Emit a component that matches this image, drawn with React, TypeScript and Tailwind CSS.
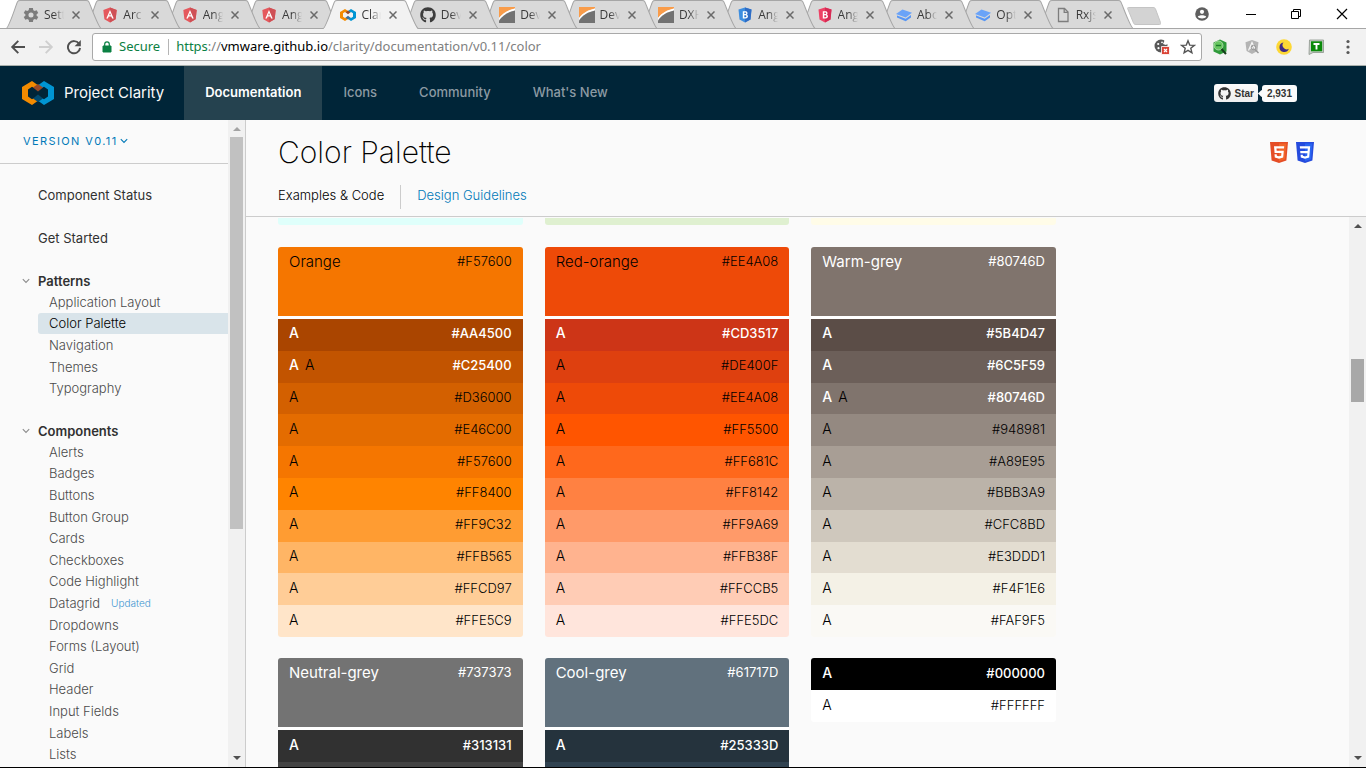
import type { ReactNode } from 'react';
import { FaGithub } from 'react-icons/fa';

/* ---------- icons ---------- */

const Gear = () => (
  <svg viewBox="0 0 24 24" className="h-4 w-4" fill="#7c7c7c">
    <path d="M20.4 13.2a8.6 8.6 0 0 0 0-2.4l2.5-1.9-2.4-4.2-3 1.2a8.5 8.5 0 0 0-2.1-1.2L14.9 1.500H9.100l-.5 3.200a8.500 8.500 0 0 0-2.100 1.200l-3-1.200L1.100 8.900l2.500 1.900a8.600 8.600 0 0 0 0 2.400l-2.500 1.900 2.400 4.200 3-1.200c.6.5 1.300.9 2.100 1.200l.5 3.200h5.800l.5-3.200a8.500 8.500 0 0 0 2.100-1.200l3 1.200 2.400-4.200zM12 15.800a3.800 3.800 0 1 1 0-7.600 3.800 3.800 0 0 1 0 7.600z" fillRule="evenodd" />
  </svg>
);

const Angular = () => (
  <svg viewBox="0 0 16 16" className="h-4 w-4">
    <path d="M8 .5 14.700 2.900 13.600 12.200 8 15.500 2.400 12.200 1.300 2.900z" fill="#e5585d" />
    <path d="M8 .5 14.700 2.900 13.600 12.200 8 15.500z" fill="#cf5055" />
    <path d="M8 3 4.300 11.500h1.600l.8-2h2.600l.8 2h1.600zM8 5.900l.9 2.300H7.100z" fill="#fff" />
  </svg>
);

const ClarityMark = ({ className, back }: { className: string; back: string }) => (
  <svg viewBox="0 0 32 24" className={className}>
    <path d="M10 0 0 6v12l10 6 6-4.200-3.800-2.800L10 18.200 6 15.600V8.400l4-2.600 2.200 1.200L16 4.200z" fill="#f38b00" />
    <path d="M22 0 32 6v12l-10 6-6-4.200 3.800-2.800 2.200 1.200 4-2.600V8.400l-4-2.600-2.200 1.200L16 4.200z" fill="#0095d3" />
    <path d="m16 3 5 3.500-5 4-5-4z" fill="#9b4a26" />
    <path d="m16 13.500 5 4-5 3.500-5-3.500z" fill={back} />
  </svg>
);

const DevExtreme = () => (
  <svg viewBox="0 0 16 16" className="h-4 w-4">
    <path d="M0 0h16v1.500C9 3 4 6 0 11z" fill="#f99c4a" />
    <path d="M0 11C4 6 9 3 16 1.500v2C9 5 4 8 0 13.500z" fill="#fff" />
    <path d="M16 3.500V16H0v-2.500C4 8 9 5 16 3.500z" fill="#727272" />
  </svg>
);

const BadgeB = ({ left, right }: { left: string; right: string }) => (
  <svg viewBox="0 0 16 16" className="h-4 w-4">
    <path d="M8 .5 14.500 2.500 13.500 12.500 8 15.500 2.500 12.500 1.500 2.500z" fill={left} />
    <path d="M8 .5 14.500 2.500 13.500 12.500 8 15.500z" fill={right} />
    <path d="M5.800 4.200h2.700c2.300 0 2.700 2.700 1.100 3.400 2.200.7 1.700 3.900-1 3.900H5.800zM7.200 5.500v1.600h1.200c1.100 0 1.100-1.600 0-1.600zm0 2.800v1.900h1.300c1.300 0 1.300-1.900 0-1.900z" fill="#fff" fillRule="evenodd" />
  </svg>
);

const Layers = () => (
  <svg viewBox="0 0 16 16" className="h-4 w-4">
    <path d="M6.500 2.500 16 5.800 9.700 10.500 0 7z" fill="#6aa3f8" />
    <path d="m1 8.500 8.700 3.300L15 8v2.500l-5.300 3.700L1 10.500z" fill="#5796f5" />
  </svg>
);

const PageIcon = () => (
  <svg viewBox="0 0 16 16" className="h-4 w-4" fill="none" stroke="#7d7d7d" strokeWidth="1.300">
    <path d="M3.500 1.500h6l3.500 3.500v9.500H3.500z" />
    <path d="M9.200 1.500v3.800H13" />
  </svg>
);

const Chevron = ({ className }: { className: string }) => (
  <svg viewBox="0 0 8 6" className={className} fill="none" stroke="currentColor" strokeWidth="1.100">
    <path d="m.8 1.200 3.200 3.200 3.200-3.200" />
  </svg>
);

const Arrow = ({ up = false, color }: { up?: boolean; color: string }) => (
  <svg viewBox="0 0 8 4" className="h-1 w-2 shrink-0" fill={color}>
    <path d={up ? 'M4 0 8 4H0z' : 'M0 0h8L4 4z'} />
  </svg>
);

const Html5 = () => (
  <svg viewBox="0 0 18 21" className="h-[21px] w-[18px]">
    <path d="M0 0h18l-1.600 18.500L9 21l-7.400-2.500z" fill="#e54d26" />
    <path d="M9 1.500h7.400L15 17.300 9 19.200z" fill="#f16529" />
    <path d="M4 4.200h10.200l-.2 2.300H6.500l.2 2.300h7.100l-.6 6.600L9 16.700l-4.200-1.300-.3-3.100h2.200l.2 1.400 2.100.6 2.200-.6.2-2.600H4.600z" fill="#fff" />
  </svg>
);

const Css3 = () => (
  <svg viewBox="0 0 18 21" className="h-[21px] w-[18px]">
    <path d="M0 0h18l-1.600 18.500L9 21l-7.400-2.500z" fill="#254bdd" />
    <path d="M9 1.500h7.400L15 17.300 9 19.200z" fill="#2965f1" />
    <path d="M3.800 4.200h10.400l-1 11.200L9 16.700l-4.200-1.300-.2-2.700h2.200l.1 1.100 2.100.6 2.200-.6.2-2.600H4.400l-.2-2.200h7.400l.2-2.400H4z" fill="#fff" />
  </svg>
);

/* ---------- browser chrome ---------- */

type TabInfo = { text: string; icon: ReactNode; active?: boolean };

const tabs: TabInfo[] = [
  { text: 'Sett', icon: <Gear /> },
  { text: 'Arc', icon: <Angular /> },
  { text: 'Ang', icon: <Angular /> },
  { text: 'Ang', icon: <Angular /> },
  { text: 'Clar', icon: <ClarityMark className="h-3 w-4" back="#3b6f9a" />, active: true },
  { text: 'Dev', icon: <FaGithub size={16} color="#3c3c3c" /> },
  { text: 'Dev', icon: <DevExtreme /> },
  { text: 'Dev', icon: <DevExtreme /> },
  { text: 'DXH', icon: <DevExtreme /> },
  { text: 'Ang', icon: <BadgeB left="#3d8ee0" right="#2f6cc4" /> },
  { text: 'Ang', icon: <BadgeB left="#ee4266" right="#d72b55" /> },
  { text: 'Abo', icon: <Layers /> },
  { text: 'Opt', icon: <Layers /> },
  { text: 'Rxjs', icon: <PageIcon /> },
];

const Tab = ({ tab, order }: { tab: TabInfo; order: number }) => (
  <div className="relative h-[29px] min-w-0 flex-1" style={{ zIndex: order }}>
    <svg viewBox="0 0 94 29" preserveAspectRatio="none" className="absolute -right-4 left-0 h-[29px] w-[calc(100%+16px)]">
      <path d="M0 29C3 28 10 4 11.500 1.500 12 .5 12.500.5 14 .5H79c1.500 0 2 0 2.500 1C83 4 91 28 94 29z" fill={tab.active ? '#f2f2f2' : '#d9d9d9'} />
      <path d="M0 28.500C3 28 10 4 11.500 1.500 12 .5 12.500.5 14 .5H79c1.500 0 2 0 2.500 1C83 4 91 28 94 28.500" fill="none" stroke="#a6a6a6" />
      {!tab.active && <path d="M0 28.500H94" stroke="#a6a6a6" />}
    </svg>
    <button className="relative flex h-[29px] w-full items-center pl-[17px] text-left text-xs text-[#3a3a3a]">
      <span className="w-4 shrink-0">{tab.icon}</span>
      <span className="ml-[5px] w-5 shrink-0 overflow-hidden whitespace-nowrap [mask-image:linear-gradient(to_right,#000_50%,transparent)]">{tab.text}</span>
      <svg viewBox="0 0 8 8" className="ml-2 h-2 w-2 shrink-0" stroke="#6a6a6a" strokeWidth="1.500">
        <path d="m.5.500 7 7m0-7-7 7" />
      </svg>
    </button>
  </div>
);

const TabStrip = () => (
  <div className="flex h-[29px] shrink-0 border-b border-[#a6a6a6] bg-white pl-1.5">
    <div className="isolate flex h-[29px] max-w-[1111px] flex-1">
      {tabs.map((t, i) => (
        <Tab key={i} tab={t} order={t.active ? 30 : 20 - i} />
      ))}
    </div>
    <button aria-label="New tab" className="ml-2.5 h-7">
      <svg viewBox="0 0 34 18" className="mt-[3px] h-[18px] w-[34px]">
        <path d="M1.500.5H26c1.500 0 2 .5 2.500 1.500l5 13.500c.5 1.500 0 2-1 2H9c-1.500 0-2-.5-2.500-1.500L.8 2C.4 1 .5.500 1.500.5z" fill="#d3d3d3" stroke="#c4c4c4" />
      </svg>
    </button>
    <div className="ml-auto flex h-[27px] items-center pr-[18px]">
      <button aria-label="Profile">
        <svg viewBox="0 0 14 14" className="h-3.5 w-3.5">
          <circle cx="7" cy="7" r="6.800" fill="#5f5f5f" />
          <circle cx="7" cy="4.800" r="2.100" fill="#fff" />
          <path d="M2.800 9.800C4 7.800 10 7.800 11.200 9.800 10 12 4 12 2.800 9.800z" fill="#fff" />
        </svg>
      </button>
      <button aria-label="Minimize" className="ml-9">
        <svg viewBox="0 0 12 12" className="h-3 w-3" stroke="#000"><path d="M1 6.500h10" /></svg>
      </button>
      <button aria-label="Restore" className="ml-[33px]">
        <svg viewBox="0 0 12 12" className="h-3 w-3" fill="none" stroke="#000"><path d="M1.500 3.500h7v7h-7zM3.500 3.500v-2h7v7h-2" /></svg>
      </button>
      <button aria-label="Close window" className="ml-[34px]">
        <svg viewBox="0 0 12 12" className="h-3 w-3" stroke="#000" strokeWidth="1.200"><path d="m1 1 10 10M11 1 1 11" /></svg>
      </button>
    </div>
  </div>
);

const Toolbar = () => (
  <div className="flex h-[37px] shrink-0 items-center border-b border-[#a9b0ac] bg-[#f2f2f2] pl-2.5 pr-2.5">
    <button aria-label="Back">
      <svg viewBox="0 0 16 16" className="h-4 w-4" fill="none" stroke="#4f4f4f" strokeWidth="1.900"><path d="M15 8H2.500M8.300 1.800 2.200 8l6.100 6.200" /></svg>
    </button>
    <button aria-label="Forward" className="ml-3">
      <svg viewBox="0 0 16 16" className="h-4 w-4" fill="none" stroke="#cfcfcf" strokeWidth="1.900"><path d="M1 8h12.500M7.700 1.800 13.800 8l-6.100 6.200" /></svg>
    </button>
    <button aria-label="Reload" className="ml-3">
      <svg viewBox="0 0 16 16" className="h-4 w-4"><path d="M13 4.600A6.100 6.100 0 1 0 14.100 9" fill="none" stroke="#4f4f4f" strokeWidth="1.900" /><path d="M14.800 1v6.200H8.600z" fill="#4f4f4f" /></svg>
    </button>
    <div className="ml-2.5 flex h-7 flex-1 items-center rounded-[3px] border border-[#a9a9a9] bg-white pl-[9px] pr-[5px] font-['Noto_Sans',sans-serif] text-[13px]">
      <svg viewBox="0 0 10 12" className="h-3 w-2.5"><path d="M1 5h8v6H1z" fill="#0b8043" stroke="#0b8043" /><path d="M2.700 5V3.200a2.300 2.300 0 0 1 4.600 0V5" fill="none" stroke="#0b8043" strokeWidth="1.200" /></svg>
      <span className="ml-[7px] text-[#0b8043]">Secure</span>
      <span className="ml-2 mr-[7px] h-4 w-px bg-[#b5b5b5]" />
      <div role="textbox" aria-label="Address" tabIndex={0} className="min-w-0 flex-1 overflow-hidden whitespace-nowrap text-[#808080]">
        <span className="text-[#0b8043]">https</span>://<span className="text-black">vmware.github.io</span>/clarity/documentation/v0.11/color
      </div>
      <button aria-label="Cookies blocked">
        <svg viewBox="0 0 16 16" className="h-4 w-4">
          <circle cx="7" cy="7" r="6.500" fill="#585858" />
          <circle cx="4.200" cy="5" r="1.100" fill="#fff" /><circle cx="8" cy="3.300" r=".9" fill="#fff" /><circle cx="4.500" cy="9.200" r="1.100" fill="#fff" />
          <path d="M11 .5 14.500 4 12 6 9 5z" fill="#fff" />
          <path d="M7.500 7.500h8v8h-8z" fill="#db4437" stroke="#fff" strokeWidth=".8" />
          <path d="m10 10 3 3m0-3-3 3" stroke="#fff" strokeWidth="1.200" />
        </svg>
      </button>
      <button aria-label="Bookmark" className="ml-2.5">
        <svg viewBox="0 0 16 16" className="h-4 w-4" fill="none" stroke="#555" strokeWidth="1.400"><path d="m8 1.800 1.700 4.300 4.600.3-3.500 2.900 1.100 4.500L8 11.300l-3.900 2.500 1.100-4.500-3.500-2.900 4.600-.3z" /></svg>
      </button>
    </div>
    <div className="ml-2.5 flex items-center gap-4">
      <button aria-label="Inspector extension">
        <svg viewBox="0 0 16 16" className="h-4 w-4">
          <path d="M8 .5 14.500 3.500v9L8 15.500 1.500 12.500v-9z" fill="#2f9a3a" />
          <circle cx="6.500" cy="6.500" r="4.500" fill="#67c65f" stroke="#b5dcb3" strokeWidth=".8" />
          <path d="M4 6.500h5" stroke="#1d7c2b" strokeWidth="1.400" />
          <path d="m9.500 10 4.500 5" stroke="#163f1b" strokeWidth="2" />
        </svg>
      </button>
      <button aria-label="Augury extension">
        <svg viewBox="0 0 16 16" className="h-4 w-4">
          <path d="M8 1 14.500 3.200 13.400 12 8 15 2.600 12 1.500 3.200z" fill="#b4b4b4" />
          <path d="M4.500 11.500 8 3.500l3 6.500M6 9h3" fill="none" stroke="#f5f5f5" strokeWidth="1.300" />
          <circle cx="9.500" cy="8.500" r="2.200" fill="none" stroke="#989898" /><path d="m11 10.500 3.500 3.500" stroke="#989898" strokeWidth="1.500" />
        </svg>
      </button>
      <button aria-label="Night mode extension">
        <svg viewBox="0 0 16 16" className="h-4 w-4"><circle cx="8" cy="8" r="7.800" fill="#fdd835" /><path d="M7.500 3.500a4.800 4.800 0 1 0 5.300 6.300A4.200 4.200 0 0 1 7.500 3.500z" fill="#3f2a85" /></svg>
      </button>
      <button aria-label="Text extension">
        <svg viewBox="0 0 16 16" className="h-4 w-4">
          <path d="M1.500 1h14v12.500H5L1 15.500z" fill="#c9cfc9" stroke="#8c948c" strokeWidth=".8" />
          <path d="M3 2.300h11.200v10H3z" fill="#0a8a0a" /><path d="M5.500 5h6M8.500 5v5.500" stroke="#fff" strokeWidth="1.900" />
        </svg>
      </button>
      <button aria-label="Browser menu">
        <svg viewBox="0 0 16 16" className="h-4 w-4" fill="#585858"><circle cx="8" cy="2.500" r="1.600" /><circle cx="8" cy="8" r="1.600" /><circle cx="8" cy="13.500" r="1.600" /></svg>
      </button>
    </div>
  </div>
);

/* ---------- site ---------- */

const navLinks = ['Icons', 'Community', "What's New"];

const SiteHeader = () => (
  <header className="flex h-[54px] shrink-0 items-center bg-[#002538] pl-[22px] pr-[69px] text-[13px] font-medium">
    <a href="#home" className="flex items-center gap-2.5 text-[15px] font-normal text-[#fafafa]">
      <ClarityMark className="h-6 w-8" back="#004a70" />
      Project Clarity
    </a>
    <nav className="ml-5 flex h-full items-center pb-px text-[#8c9aa3]">
      <a href="#documentation" className="-mb-px flex h-[54px] items-center bg-[#25424f] px-[21px] font-semibold text-white">Documentation</a>
      {navLinks.map((n) => (
        <a key={n} href="#site" className="flex h-full items-center px-[21px]">{n}</a>
      ))}
    </nav>
    <div className="ml-auto flex items-center gap-1 text-[10px] font-bold text-[#333]">
      <a href="#star" className="flex h-[18px] items-center gap-1 rounded-[3px] bg-linear-to-b from-[#fcfcfc] to-[#eee] px-1 font-['Liberation_Sans',sans-serif]">
        <FaGithub size={13} />
        Star
      </a>
      <a href="#stars" className="relative flex h-[17px] items-center rounded-[3px] bg-[#fafafa] px-[5px] font-['Liberation_Sans',sans-serif]">
        <span className="absolute -left-[3px] top-[6px] h-[5px] w-[5px] rotate-45 bg-[#fafafa]" />
        2,931
      </a>
    </div>
  </header>
);

const patterns = ['Application Layout', 'Color Palette', 'Navigation', 'Themes', 'Typography'];
const components = [
  'Alerts', 'Badges', 'Buttons', 'Button Group', 'Cards', 'Checkboxes', 'Code Highlight', 'Datagrid',
  'Dropdowns', 'Forms (Layout)', 'Grid', 'Header', 'Input Fields', 'Labels', 'Lists',
];

const NavGroup = ({ title, items, height }: { title: string; items: string[]; height: string }) => (
  <section className="mt-[21px]">
    <button className="flex h-[21px] items-center font-semibold text-[#313131]">
      <Chevron className="mr-2 h-1.5 w-2 text-[#8c8c8c]" />
      {title}
    </button>
    <ul className={`ml-4 grid auto-rows-fr ${height}`}>
      {items.map((it) => (
        <li key={it} className="flex min-h-0">
          <a href="#item" className={`flex flex-1 items-center rounded-l-[3px] pl-[11px] ${it === 'Color Palette' ? 'bg-[#d9e4ea] text-black' : ''}`}>
            {it}
            {it === 'Datagrid' && <span className="ml-[11px] text-[10px] text-[#4095d0]">Updated</span>}
          </a>
        </li>
      ))}
    </ul>
  </section>
);

const Sidebar = () => (
  <aside className="flex w-[246px] shrink-0 border-r border-[#ccc]">
    <div className="flex-1 overflow-hidden text-[13px] leading-5 text-[#4a4a4a]">
      <div className="flex h-11 items-center border-b border-[#ccc] pb-0.5 pl-[23px]">
        <button className="flex items-center gap-0.5 text-[11px] tracking-[1.400px] text-[#0079b8]">
          VERSION V0.11
          <Chevron className="h-1.5 w-2" />
        </button>
      </div>
      <nav className="pl-[22px] pt-5 font-light">
        <a href="#status" className="flex h-[22px] items-center pl-4 font-normal text-[#313131]">Component Status</a>
        <a href="#start" className="mt-[21px] flex h-[22px] items-center pl-4 font-normal text-[#313131]">Get Started</a>
        <NavGroup title="Patterns" items={patterns} height="h-[108px]" />
        <NavGroup title="Components" items={components} height="h-[324px]" />
      </nav>
    </div>
    <div className="flex w-[17px] flex-col items-center bg-[#f1f1f1] py-[7px]">
      <Arrow up color="#a3a3a3" />
      <div className="mt-1.5 h-[392px] w-[13px] bg-[#c1c1c1]" />
      <div className="flex-1" />
      <Arrow color="#505050" />
    </div>
  </aside>
);

/* Contrast markers: w = white text, k = black text, wk = both */
type Mark = 'w' | 'k' | 'wk';
type Shade = [hex: string, mark: Mark];
type Palette = { name: string; hex: string; light?: boolean; shades: Shade[] };

const palettes: Palette[] = [
  {
    name: 'Orange', hex: '#F57600',
    shades: [['#AA4500', 'w'], ['#C25400', 'wk'], ['#D36000', 'k'], ['#E46C00', 'k'], ['#F57600', 'k'], ['#FF8400', 'k'], ['#FF9C32', 'k'], ['#FFB565', 'k'], ['#FFCD97', 'k'], ['#FFE5C9', 'k']],
  },
  {
    name: 'Red-orange', hex: '#EE4A08',
    shades: [['#CD3517', 'w'], ['#DE400F', 'k'], ['#EE4A08', 'k'], ['#FF5500', 'k'], ['#FF681C', 'k'], ['#FF8142', 'k'], ['#FF9A69', 'k'], ['#FFB38F', 'k'], ['#FFCCB5', 'k'], ['#FFE5DC', 'k']],
  },
  {
    name: 'Warm-grey', hex: '#80746D', light: true,
    shades: [['#5B4D47', 'w'], ['#6C5F59', 'w'], ['#80746D', 'wk'], ['#948981', 'k'], ['#A89E95', 'k'], ['#BBB3A9', 'k'], ['#CFC8BD', 'k'], ['#E3DDD1', 'k'], ['#F4F1E6', 'k'], ['#FAF9F5', 'k']],
  },
];

const greys: Palette[] = [
  { name: 'Neutral-grey', hex: '#737373', light: true, shades: [['#313131', 'w']] },
  { name: 'Cool-grey', hex: '#61717D', light: true, shades: [['#25333D', 'w']] },
];
const nextShade: Record<string, string> = { 'Neutral-grey': 'bg-[#444444]', 'Cool-grey': 'bg-[#314351]' };

const ShadeRow = ({ shade: [hex, mark] }: { shade: Shade }) => (
  <li className={`flex h-8 items-center justify-between px-[11px] pb-[3px] ${mark === 'k' ? 'font-light text-black' : 'font-medium text-white'}`} style={{ backgroundColor: hex }}>
    <span className="flex gap-1.5 text-sm">
      <span>A</span>
      {mark === 'wk' && <span className="font-light text-black">A</span>}
    </span>
    <span>{hex}</span>
  </li>
);

const PaletteCard = ({ palette }: { palette: Palette }) => (
  <article className="overflow-hidden rounded-[3px] bg-white">
    <div className={`flex h-[69px] items-start justify-between px-[11px] pt-1 ${palette.light ? 'text-white' : 'font-light text-black'}`} style={{ backgroundColor: palette.hex }}>
      <h3 className="pt-px text-[15px]">{palette.name}</h3>
      <span>{palette.hex}</span>
    </div>
    <ul className="mt-[3px] flex max-h-[318px] flex-col">
      {palette.shades.map((s) => <ShadeRow key={s[0]} shade={s} />)}
      {nextShade[palette.name] && <li className={`h-8 ${nextShade[palette.name]}`} />}
    </ul>
  </article>
);

const Content = () => (
  <main className="flex min-w-0 flex-1 flex-col">
    <div className="flex h-[97px] shrink-0 flex-col border-b border-[#ccc] pl-8">
      <div className="flex items-center justify-between pr-[52px] pt-3.5">
        <h1 className="text-[30px] font-extralight leading-9 text-black">Color Palette</h1>
        <div className="flex gap-2"><Html5 /><Css3 /></div>
      </div>
      <div className="mt-[15px] flex h-6 items-center text-[13px]">
        <a href="#examples" className="flex h-6 items-center border-r border-[#ccc] pb-0.5 pr-4 font-light text-black">Examples &amp; Code</a>
        <a href="#guidelines" className="flex h-6 items-center pb-0.5 pl-4 font-light text-[#0079b8]">Design Guidelines</a>
      </div>
    </div>
    <div className="flex min-h-0 flex-1">
      <div className="min-w-0 flex-1 overflow-hidden pl-8 pt-px text-[13px] leading-5">
        <div className="grid max-w-[778px] grid-cols-3 gap-x-[22px]">
          <div className="h-[7px] rounded-b-[3px] bg-[#dffffb]" />
          <div className="h-[7px] rounded-b-[3px] bg-[#dff0d0]" />
          <div className="h-[7px] rounded-b-[3px] bg-[#fffce8]" />
        </div>
        <div className="mt-[22px] grid max-w-[778px] grid-cols-3 items-start gap-x-[22px] gap-y-[21px]">
          {palettes.map((p) => <PaletteCard key={p.name} palette={p} />)}
          {greys.map((p) => <PaletteCard key={p.name} palette={p} />)}
          <ul className="overflow-hidden rounded-[3px]">
            <ShadeRow shade={['#000000', 'w']} />
            <ShadeRow shade={['#FFFFFF', 'k']} />
          </ul>
        </div>
      </div>
      <div className="flex w-[17px] shrink-0 flex-col items-center bg-[#f1f1f1] py-[7px]">
        <Arrow up color="#505050" />
        <div className="mt-[131px] h-[43px] w-[13px] bg-[#a8a8a8]" />
        <div className="flex-1" />
        <Arrow color="#505050" />
      </div>
    </div>
  </main>
);

export default function App() {
  return (
    <div className="flex h-screen flex-col overflow-hidden border-b border-black bg-[#fafafa] font-['Inter',sans-serif]">
      <div className="font-['Open_Sans',sans-serif]">
        <TabStrip />
        <Toolbar />
      </div>
      <SiteHeader />
      <div className="flex min-h-0 flex-1">
        <Sidebar />
        <Content />
      </div>
    </div>
  );
}
